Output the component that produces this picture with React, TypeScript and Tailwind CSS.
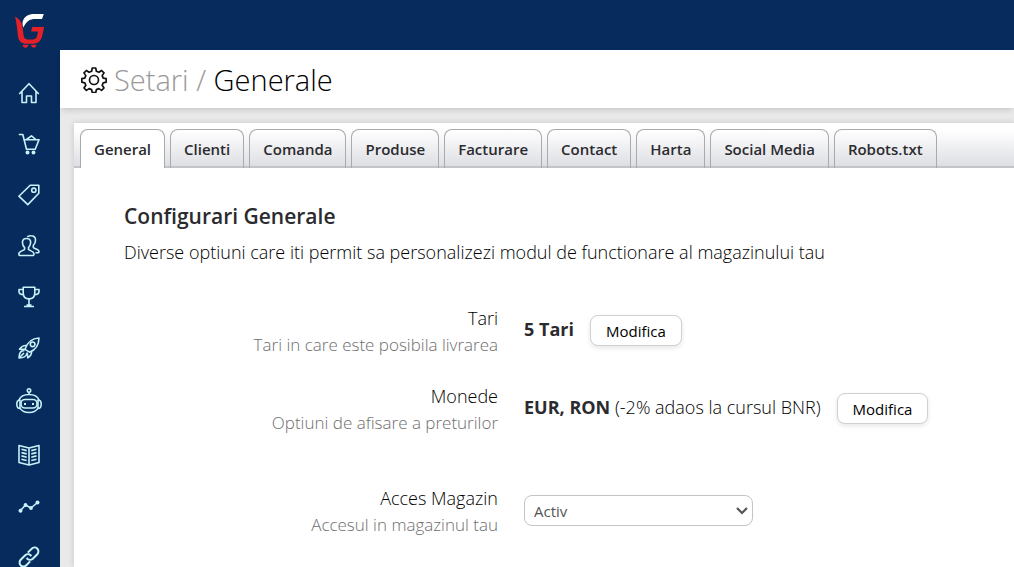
import type { ReactNode } from "react";

type NavItem = {
  label: string;
  icon: ReactNode;
  tall?: boolean;
};

const navItems: NavItem[] = [
  {
    label: "Acasa",
    icon: (
      <path d="M1.200 12 11 1.700l9.800 10.300M4 9.500V20.500h4.500v-6.500h5v6.500h4.500V9.500" />
    ),
  },
  {
    label: "Comenzi",
    icon: (
      <>
        <path d="M.8 1.500h4l3.700 14.700h8.700L21 6.800H6.200" />
        <path d="m8.500 6.500 5-3.700 4.300 3.700" />
        <circle cx="9.500" cy="19.500" r="1.200" fill="currentColor" />
        <circle cx="15.500" cy="19.500" r="1.200" fill="currentColor" />
      </>
    ),
  },
  {
    label: "Produse",
    icon: (
      <>
        <path d="M12.200 1.200h8.600v8L9.800 20.600.9 12.200Z" />
        <circle cx="15.800" cy="6.200" r="2.100" />
      </>
    ),
  },
  {
    label: "Clienti",
    icon: (
      <>
        <path d="M6.600 14.200v-1.600C5 11 4.300 8.600 4.500 6.700 4.700 4.600 6.300 3.500 8.500 3.500s3.900 1.100 4.100 3.200c.2 1.900-.5 4.300-2.100 5.900v1.600c.5 1.500 5.200 1.600 5.500 4.400 0 .9-.2 1.900-.8 1.900H1.700c-.6 0-.9-1-.8-1.900.3-2.800 5.200-2.900 5.700-4.400Z" />
        <path d="M9.300 1.900C10.200 1 11.500.7 13 .8c2.700.1 4.400 1.700 4.500 4 .1 1.900-.6 4-2.200 5.600v1.900c.7 1.500 5.400 1.500 5.700 4.200 0 .7-.2 1.300-.8 1.300h-2.700" />
      </>
    ),
  },
  {
    label: "Promotii",
    icon: (
      <>
        <path d="M5.200 1.200h11.600v5.200c0 4-2.300 6.500-5.800 6.500S5.200 10.400 5.200 6.400ZM5 3.500H1v2c0 2.200 1.400 3.200 4.800 3.200M17 3.500h4v2c0 2.200-1.400 3.200-4.800 3.200" />
        <path d="M11 13v6M8.500 19h5M6 20.500h10" />
      </>
    ),
  },
  {
    label: "Marketing",
    icon: (
      <>
        <path d="M7 12.300C9 6.200 13 1.300 21 1c-.2 7.500-3.500 12-9.500 14.200Z" />
        <circle cx="14.600" cy="7.300" r="2.300" />
        <path d="M8.500 8.600C5.300 8.300 3.400 9.700 1.500 12.300l5.300.1M13.500 14c.4 3.200-1 5.200-3.700 6.800l-.6-5.300M6.500 13.400C2.800 13.300 1.100 16 1 21c5 0 7.500-1.700 8-5M1.500 20.500l4.500-4.500" />
      </>
    ),
  },
  {
    label: "Automatizari",
    tall: true,
    icon: (
      <>
        <circle cx="13" cy="2.500" r="1.700" />
        <path d="M13 4.200v2.300M3 12c1.300-3.500 5-5.500 10-5.500S21.700 8.500 23 12M4 20c1.500 3 4.800 4.500 9 4.500s7.500-1.500 9-4.500" />
        <rect x="5" y="11.500" width="16" height="8.500" rx="4" />
        <path d="M4 12v8.500C1.700 20.500.8 19 .8 16.200S1.700 12 4 12ZM22 12v8.500c2.300 0 3.200-1.500 3.200-4.300S24.300 12 22 12Z" />
        <path d="M8 15h2v2H8zM16 15h2v2h-2z" fill="currentColor" stroke="none" />
      </>
    ),
  },
  {
    label: "Blog",
    icon: (
      <>
        <path d="M1 1.500 11 4l10-2.500v17L11 21 1 18.500ZM11 4v17" />
        <path d="m3.500 5.300 5.200 1.300M3.500 8.600l5.200 1.300M3.500 11.900l5.200 1.300M3.500 15.200l5.200 1.300M18.500 5.300l-5.200 1.300M18.500 8.600l-5.200 1.300M18.500 11.900l-5.200 1.300M18.500 15.200l-5.200 1.300" />
      </>
    ),
  },
  {
    label: "Rapoarte",
    icon: (
      <>
        <path d="m2.500 15.500 5-5.500 5.500 3 6.500-5.500" />
        <g fill="currentColor" stroke="none">
          <circle cx="2.500" cy="15.700" r="2" />
          <circle cx="7.500" cy="10" r="1.900" />
          <circle cx="13" cy="13" r="1.900" />
          <circle cx="19.500" cy="7.500" r="2" />
        </g>
      </>
    ),
  },
  {
    label: "Integrari",
    icon: (
      <g strokeWidth="2">
        <path d="M9.800 6.600 13.700 2.700c1.500-1.600 3.900-1.700 5.500-.2s1.600 4.100.1 5.700l-4.500 4.500c-1.600 1.500-4 1.500-5.500 0l-.6-.8" />
        <path d="M12.200 15.400l-3.900 3.900c-1.500 1.600-3.900 1.700-5.500.2s-1.600-4.100-.1-5.700l4.500-4.500c1.600-1.500 4-1.500 5.500 0l.6.800" />
      </g>
    ),
  },
];

const tabs = [
  "General",
  "Clienti",
  "Comanda",
  "Produse",
  "Facturare",
  "Contact",
  "Harta",
  "Social Media",
  "Robots.txt",
];

function Logo() {
  return (
    <svg viewBox="0 0 30 36" className="h-9 w-[30px]" aria-hidden="true">
      <path
        d="M8.500 14.500C7 11.500 7.300 8.500 8.500 6.500 10.700 2.500 14.500 1 19.500 1h9.300l-1.800 5h-6.500c-6 0-9.500 2.500-12 8.500Z"
        fill="#fff"
      />
      <path
        d="M0 3.500c4.500 2.500 7 6 7.600 11l.8 6.500c.4 3.800 1.800 5.500 5.100 5.500h4c2.700 0 4.200-1.300 4.800-4.200l.8-3.800h-7l1.100-4.500h11.900l-1.700 8.200c-1.300 5.800-4.600 8.600-10.400 8.600h-5c-5.600 0-8.300-2.400-9-7.800L1.900 14C1.500 10.500 1 7.500 0 3.500Z"
        fill="#e42029"
      />
      <path
        d="M7.500 31.800h6c-.3 1.800-1.300 3-3 3s-2.700-1.200-3-3ZM16 31.800h5.500c-.3 1.800-1.200 3-2.700 3s-2.500-1.200-2.800-3Z"
        fill="#e42029"
      />
    </svg>
  );
}

function GearIcon() {
  return (
    <svg
      viewBox="0 0 26 26"
      className="h-[26px] w-[26px] shrink-0"
      fill="none"
      stroke="#111"
      strokeWidth="1.700"
      strokeLinejoin="round"
      aria-hidden="true"
    >
      <path d="M11.300 1h3.400l.7 3.300 2.500 1 2.700-1.800 2.400 2.400-1.800 2.700 1 2.500 3 .6v3.400l-3 .7-1 2.500 1.800 2.700-2.400 2.400-2.700-1.800-2.500 1-.7 3.100h-3.400l-.7-3.100-2.500-1-2.700 1.800L3 21l1.800-2.700-1-2.500-3-.7v-3.400l3-.6 1-2.500L3 5.900l2.400-2.400 2.700 1.800 2.500-1Z" />
      <circle cx="13" cy="13" r="4.500" />
    </svg>
  );
}

function Sidebar() {
  return (
    <aside className="flex w-[60px] shrink-0 flex-col overflow-hidden bg-[#082b5d]">
      <a
        href="#"
        aria-label="Panou principal"
        className="flex h-[67px] shrink-0 items-start justify-center pt-[13px]"
      >
        <Logo />
      </a>

      <nav className="flex flex-col text-[#c6f2f8]">
        {navItems.map((item) => (
          <a
            key={item.label}
            href="#"
            aria-label={item.label}
            className={`flex shrink-0 items-center justify-center pr-[2px] ${
              item.tall ? "h-14" : "h-[51px]"
            }`}
          >
            <svg
              viewBox={item.tall ? "0 0 26 26" : "0 0 22 22"}
              className={item.tall ? "size-[26px]" : "size-[22px]"}
              fill="none"
              stroke="currentColor"
              strokeWidth="1.600"
              strokeLinejoin="round"
              aria-hidden="true"
            >
              {item.icon}
            </svg>
          </a>
        ))}
      </nav>
    </aside>
  );
}

function EditButton() {
  return (
    <button
      type="button"
      className="h-[31px] rounded-lg border border-[#d0d0d0] bg-white px-[15px] text-[15px] leading-6 text-black shadow-[0_2px_5px_rgba(0,0,0,0.1)]"
    >
      Modifica
    </button>
  );
}

type SettingRowProps = {
  title: string;
  hint: string;
  htmlFor?: string;
  children: ReactNode;
};

function SettingRow({ title, hint, htmlFor, children }: SettingRowProps) {
  const text = (
    <>
      <span className="block text-lg font-light leading-[26px] text-black">
        {title}
      </span>
      <span className="block text-[17px] font-light leading-7 text-[#6e6e6e]">
        {hint}
      </span>
    </>
  );

  return (
    <div className="flex items-start gap-[26px]">
      <div className="w-[424px] shrink-0 text-right">
        {htmlFor ? <label htmlFor={htmlFor}>{text}</label> : text}
      </div>
      <div className="mt-[10px] flex items-start gap-4 text-lg leading-7">
        {children}
      </div>
    </div>
  );
}

export default function App() {
  return (
    <div className="flex h-screen overflow-hidden bg-[#e9e9e9] font-['Open_Sans',sans-serif] text-[#2b2b2f]">
      <Sidebar />

      <div className="flex min-w-0 flex-1 flex-col">
        <div className="h-[50px] shrink-0 bg-[#082b5d]" />

        <header className="flex h-[58px] shrink-0 items-center gap-[7px] bg-white pb-px pl-[21px] pt-[3px] shadow-[0_4px_6px_-2px_rgba(0,0,0,0.15)]">
          <GearIcon />
          <h1 className="text-[29px] font-light leading-10 text-black">
            <span className="text-[#999]">Setari /</span> Generale
          </h1>
        </header>

        <main className="flex-1 pl-[14px] pt-[15px]">
          <section className="h-full bg-white shadow-[0_0_6px_rgba(0,0,0,0.15)]">
            <div
              role="tablist"
              className="flex gap-[5px] bg-linear-to-b from-white from-15% to-[#dcdde2] px-[6px] pt-[6px] shadow-[inset_0_-2px_0_#c3c3c8]"
            >
              {tabs.map((tab, index) => (
                <button
                  key={tab}
                  type="button"
                  role="tab"
                  aria-selected={index === 0}
                  className={`h-[39px] rounded-t-lg border border-b-0 border-[#a9aaae] px-[13px] text-[15px] font-semibold ${
                    index === 0 ? "bg-white" : ""
                  }`}
                >
                  {tab}
                </button>
              ))}
            </div>

            <div className="px-[50px] pt-[33px]">
              <h2 className="text-[21px] font-semibold leading-[30px]">
                Configurari Generale
              </h2>
              <p className="mt-2 text-lg font-light leading-[26px] text-black">
                Diverse optiuni care iti permit sa personalizezi modul de
                functionare al magazinului tau
              </p>
            </div>

            <div className="mt-10 flex flex-col">
              <SettingRow title="Tari" hint="Tari in care este posibila livrarea">
                <strong className="font-bold">5 Tari</strong>
                <EditButton />
              </SettingRow>

              <div className="mt-6">
                <SettingRow title="Monede" hint="Optiuni de afisare a preturilor">
                  <span className="font-light text-black">
                    <strong className="font-bold text-[#2b2b2f]">
                      EUR, RON
                    </strong>{" "}
                    (-2% adaos la cursul BNR)
                  </span>
                  <EditButton />
                </SettingRow>
              </div>

              <div className="mt-12">
                <SettingRow
                  title="Acces Magazin"
                  hint="Accesul in magazinul tau"
                  htmlFor="acces-magazin"
                >
                  <div className="relative">
                    <select
                      id="acces-magazin"
                      defaultValue="activ"
                      className="block h-[31px] w-[229px] appearance-none rounded-lg border border-[#c4c4c4] bg-white px-[9px] text-[15px] text-[#555]"
                    >
                      <option value="activ">Activ</option>
                      <option value="inactiv">Inactiv</option>
                    </select>
                    <svg
                      viewBox="0 0 12 8"
                      className="pointer-events-none absolute right-[5px] top-3 h-2 w-3"
                      fill="none"
                      stroke="#555"
                      strokeWidth="2.200"
                      aria-hidden="true"
                    >
                      <path d="m1 1 5 5 5-5" />
                    </svg>
                  </div>
                </SettingRow>
              </div>
            </div>
          </section>
        </main>
      </div>
    </div>
  );
}
